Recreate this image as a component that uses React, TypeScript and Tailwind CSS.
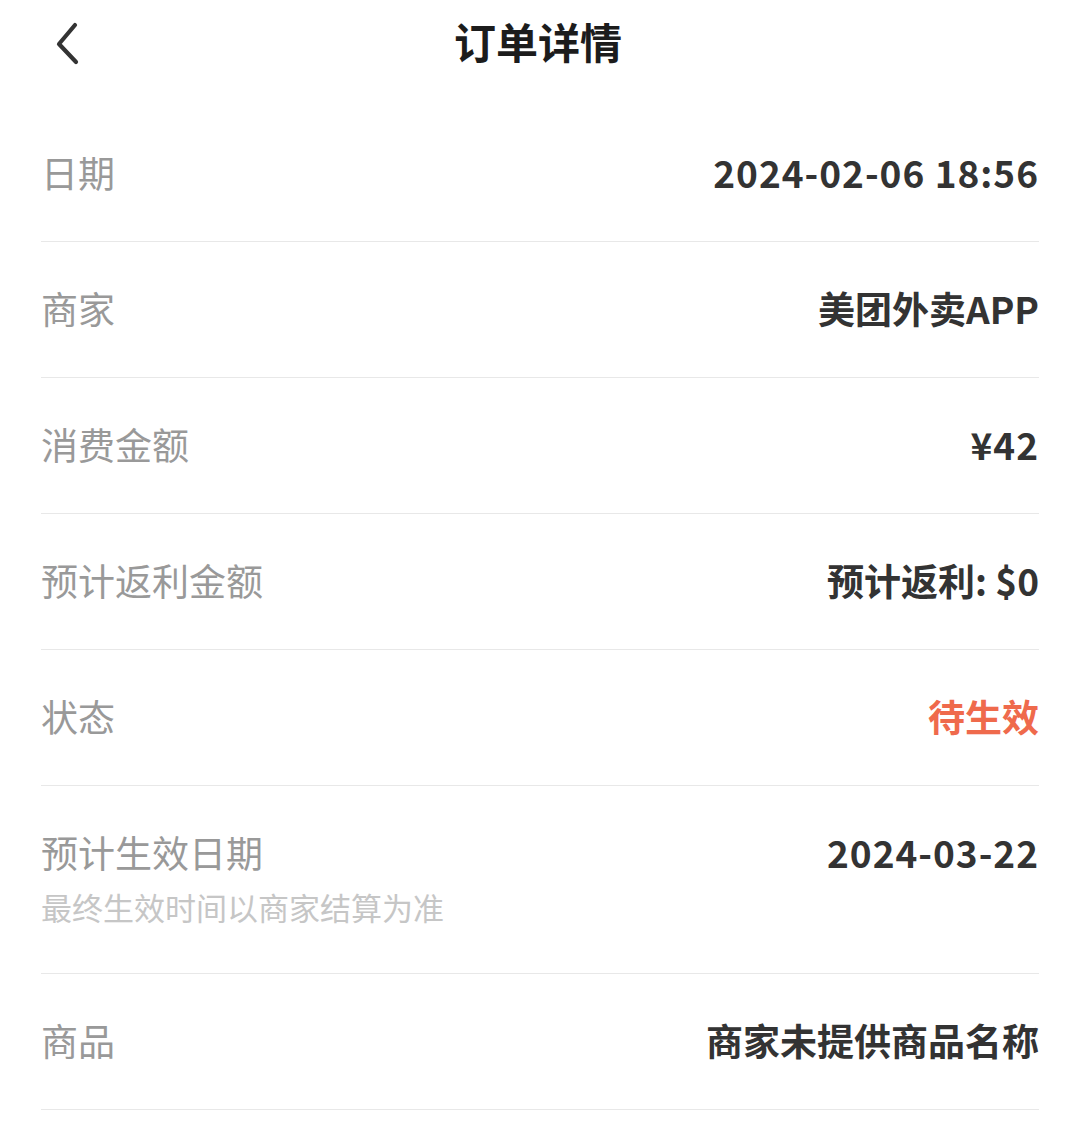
import React from "react";

const rows: { label: string; value: string; color?: string; sub?: string; num?: boolean }[] = [
  { label: "日期", value: "2024-02-06 18:56", num: true },
  { label: "商家", value: "美团外卖APP" },
  { label: "消费金额", value: "¥42", num: true },
  { label: "预计返利金额", value: "预计返利: $0" },
  { label: "状态", value: "待生效", color: "text-[#ef6a4c]" },
  { label: "预计生效日期", value: "2024-03-22", sub: "最终生效时间以商家结算为准", num: true },
  { label: "商品", value: "商家未提供商品名称" },
];

export default function App() {
  return (
    <div
      className="w-[1076px] min-h-[1130px] bg-white"
      style={{ fontFamily: '"Noto Sans CJK SC", "Noto Sans", sans-serif' }}
    >
      <div className="relative h-[106px] flex items-start justify-center">
        <div className="absolute left-[52px] top-[22px]">
          <svg width="32" height="46" viewBox="0 0 32 46" fill="none">
            <path d="M23 3 L7 22 L24 40" stroke="#333" strokeWidth="4.2" strokeLinecap="round" strokeLinejoin="round" />
          </svg>
        </div>
        <div className="mt-[14px] text-[42px] leading-[54px] font-bold text-[#1c1c1c]">订单详情</div>
      </div>
      <div className="ml-[41px] mr-[37px]">
        {rows.map((r) =>
          r.sub ? (
            <div key={r.label} className="flex justify-between items-start border-b border-[#e8e8e8] pt-[42px] pb-[46px]">
              <div>
                <div className="text-[37px] leading-[48px] text-[#999999]">{r.label}</div>
                <div className="mt-[11px] text-[31px] leading-[40px] text-[#c6c6c6]">{r.sub}</div>
              </div>
              <div className="text-[37px] leading-[48px] font-bold text-[#333333] tracking-[1px]">{r.value}</div>
            </div>
          ) : (
            <div key={r.label} className="flex justify-between items-center h-[136px] pb-[3px] border-b border-[#e8e8e8]">
              <div className="text-[37px] leading-[48px] text-[#999999]">{r.label}</div>
              <div
                className={`text-[37px] leading-[48px] font-bold ${r.color ?? "text-[#333333]"} ${r.num ? "tracking-[1px]" : ""}`}
              >
                {r.value}
              </div>
            </div>
          )
        )}
      </div>
    </div>
  );
}
